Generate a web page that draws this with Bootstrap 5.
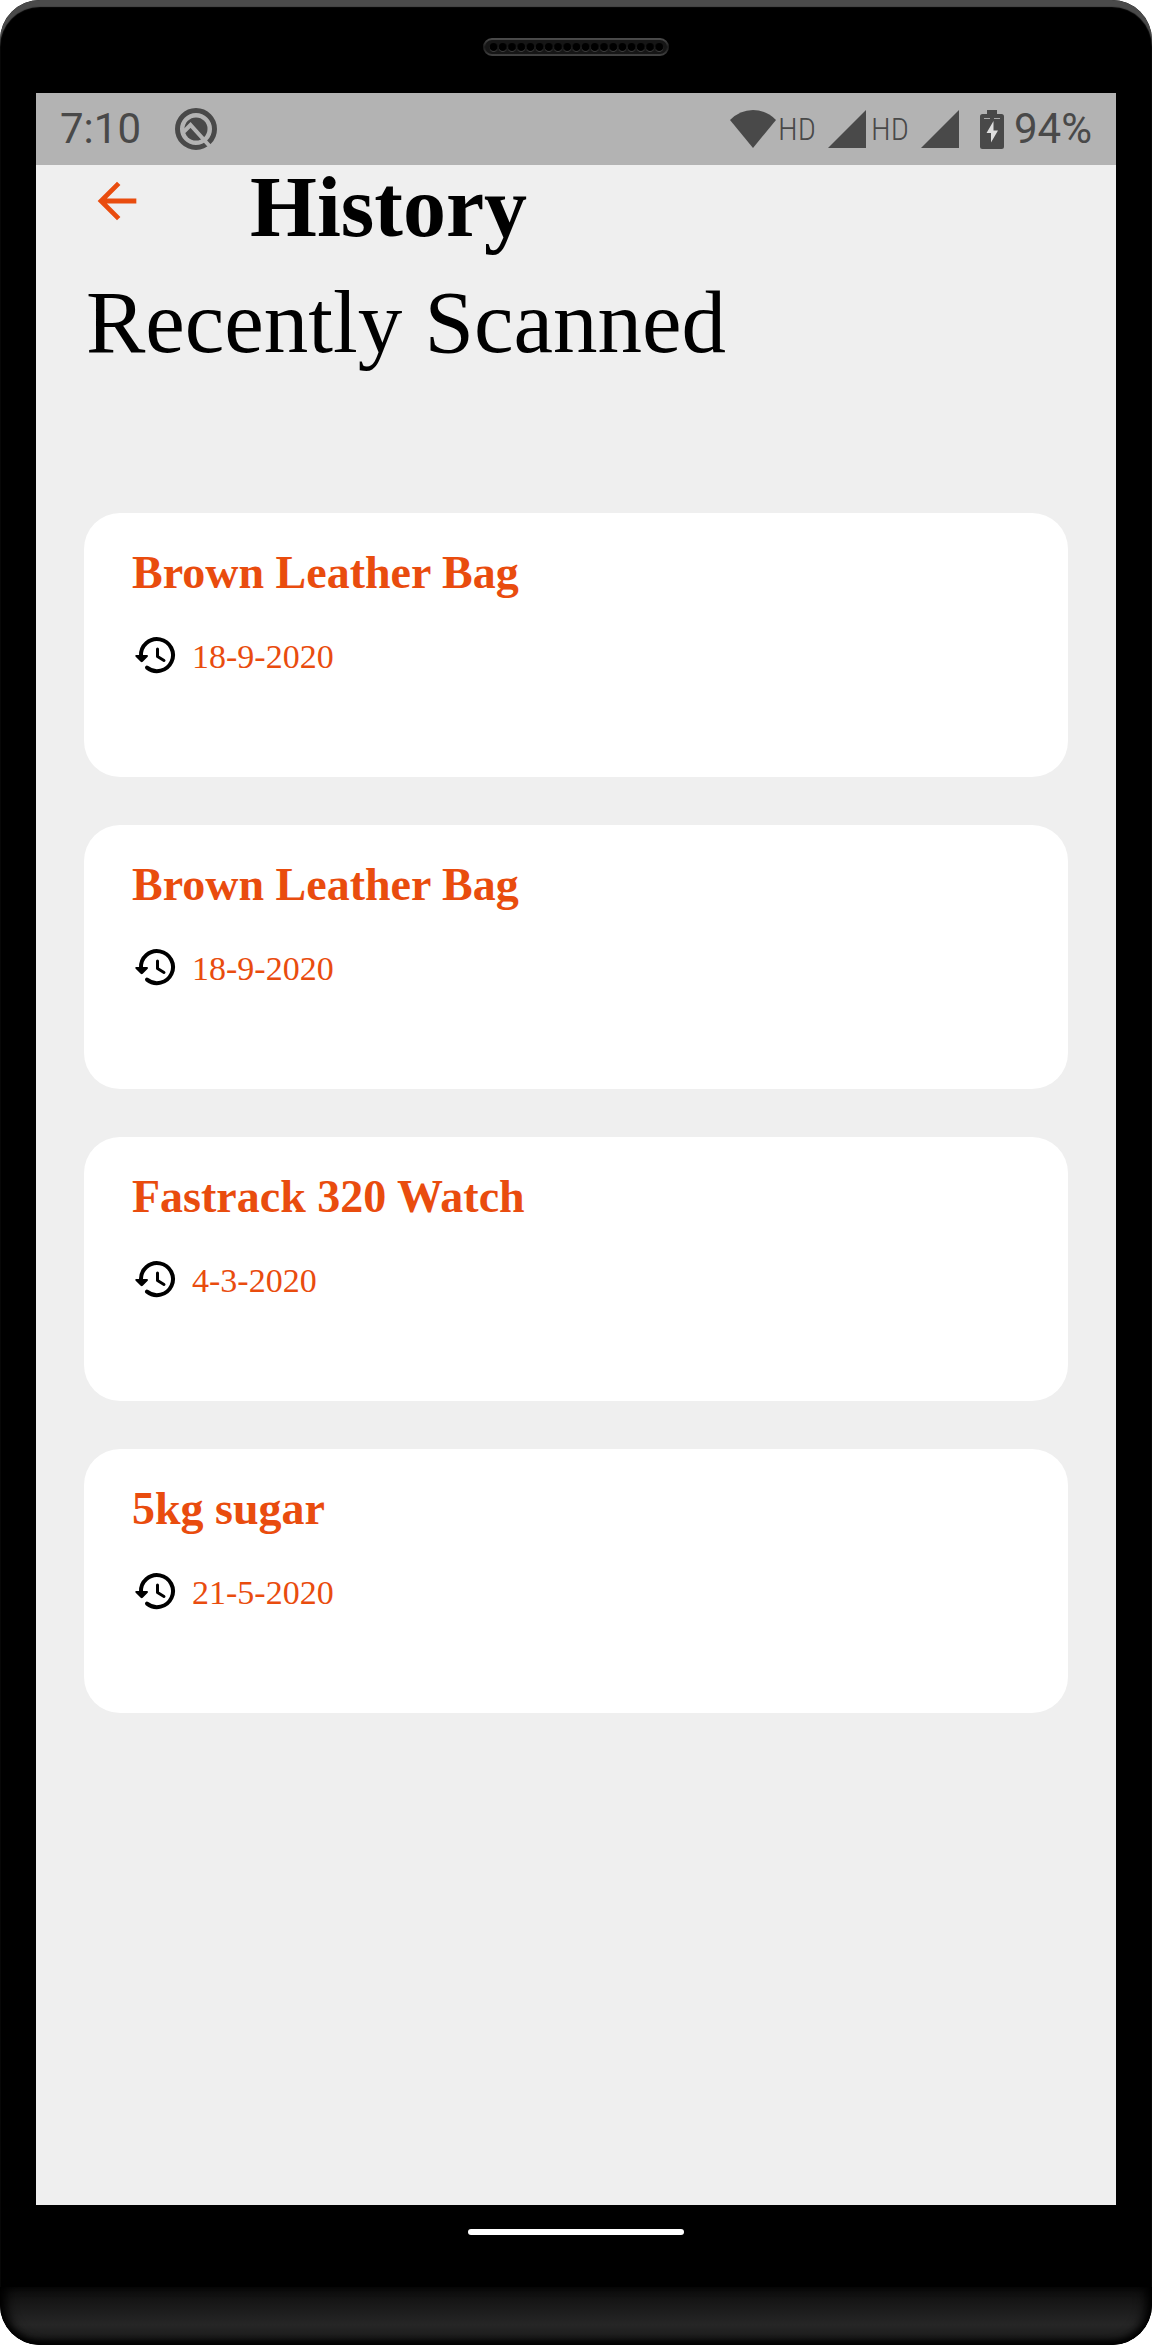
<!DOCTYPE html>
<html lang="en">
<head>
<meta charset="utf-8">
<meta name="viewport" content="width=device-width, initial-scale=1">
<title>History</title>
<link href="https://cdn.jsdelivr.net/npm/bootstrap@5.3.0/dist/css/bootstrap.min.css" rel="stylesheet">
<style>
:root { --accent: #e94c0e; --ink: #494949; }
body { background: #fff; }
.phone { background: #000; border-radius: 40px; box-shadow: inset 0 7px 1px #4a4a4a; overflow: hidden; }
.earpiece { height: 93px; padding-top: 38px; }
.earpiece svg { width: 186px; height: 18px; }
.display { margin: 0 36px; background: #efefef; color: #000; font-family: "Liberation Serif", serif; }
.status { height: 72px; padding: 0 24px; background: #b3b3b3; color: var(--ink); font: 400 42px/74px Roboto, sans-serif; }
.status svg { fill: currentColor; }
.notice-icon { margin-left: 34px; }
.signal { margin-right: 3px; }
.battery { margin: 0 10px 0 18px; }
.hd-label { width: 52px; padding-left: 2px; font: 300 32px/64px "Roboto Condensed", "Liberation Sans Narrow", "DejaVu Sans Condensed", sans-serif; }
.app-head { padding-left: 52px; gap: 104px; }
.back-btn { margin-top: 7px; color: var(--accent); line-height: 0; }
.app-title { font-size: 86px; line-height: 84px; font-weight: 700; }
.section-title { padding-left: 50px; font-size: 89px; line-height: 98px; font-weight: 400; }
.scans { margin-top: 142px; padding: 0 48px 48px; gap: 48px; }
.scan { min-height: 264px; padding: 32px 48px; border: 0; border-radius: 36px; color: var(--accent); }
.scan-name { font-size: 46px; line-height: 56px; font-weight: 700; color: var(--accent); }
.scan-date { margin-top: 34px; gap: 12px; font-size: 34px; line-height: 44px; }
.home-area { height: 82px; padding-top: 24px; }
.home-bar { width: 216px; height: 6px; border-radius: 3px; background: #fff; }
.chin { height: 58px; border-radius: 0 0 40px 40px; background: linear-gradient(#0c0c0c, #262626 65%, #1d1d1d 85%, #0b0b0b); box-shadow: inset 0 -3px 6px #000, inset 10px 0 12px -4px #000, inset -10px 0 12px -4px #000; }
</style>
</head>
<body>
<svg class="d-none" aria-hidden="true">
  <symbol id="history-icon" viewBox="0 0 48 44">
    <path d="M9 21A16 16 0 1 1 15 32.600" fill="none" stroke="#000" stroke-width="4" stroke-linecap="round"/>
    <path d="M4 20h11a1 1 0 0 1 .700 1.700l-5 5a1.500 1.500 0 0 1-2 0l-5-5A1 1 0 0 1 4 20z"/>
    <path d="M25.500 14v7.500l6.500 4" fill="none" stroke="#000" stroke-width="3" stroke-linecap="round" stroke-linejoin="round"/>
  </symbol>
  <symbol id="signal-icon" viewBox="0 0 38 38"><path d="M38 0v38H0z"/></symbol>
</svg>

<div class="phone d-flex flex-column min-vh-100">
  <div class="earpiece d-flex justify-content-center align-items-start">
    <svg viewBox="0 0 186 18" aria-hidden="true">
      <defs>
        <linearGradient id="rim" x2="0" y2="1"><stop stop-color="#4a4a4a"/><stop offset=".5" stop-color="#1c1c1c"/><stop offset="1" stop-color="#404040"/></linearGradient>
        <pattern id="holes" x="6" y="0" width="9.200" height="18" patternUnits="userSpaceOnUse">
          <circle cx="4.600" cy="9.800" r="3.900" fill="#4a4a4a"/><circle cx="4.600" cy="9" r="3.900" fill="#000"/>
        </pattern>
      </defs>
      <rect x="1" y="1" width="184" height="16" rx="8" fill="#161616" stroke="url(#rim)" stroke-width="2"/>
      <rect x="6" width="174.800" height="18" fill="url(#holes)"/>
    </svg>
  </div>

  <main class="display d-flex flex-column flex-grow-1">
    <div class="status d-flex align-items-center justify-content-between">
      <div class="d-flex align-items-center">
        <span>7:10</span>
        <svg class="notice-icon" width="42" height="42" viewBox="0 0 42 42" aria-hidden="true">
          <circle cx="21" cy="21" r="18.500" fill="none" stroke="currentColor" stroke-width="5"/>
          <circle cx="21" cy="21" r="11.500"/>
          <path d="M9 23.500l6.500-6.500L35 38.500" fill="none" stroke="#b3b3b3" stroke-width="4"/>
        </svg>
      </div>
      <div class="d-flex align-items-center">
        <svg width="46" height="38" viewBox="0 0 46 38" aria-hidden="true"><path d="M23 38L0 10Q10 0 23 0t23 10z"/></svg>
        <span class="hd-label">HD</span>
        <svg class="signal" width="38" height="38" aria-hidden="true"><use href="#signal-icon"/></svg>
        <span class="hd-label">HD</span>
        <svg class="signal" width="38" height="38" aria-hidden="true"><use href="#signal-icon"/></svg>
        <svg class="battery" width="24" height="39" viewBox="0 0 24 39" aria-hidden="true">
          <path d="M7 0h10v4h4.500A2.500 2.500 0 0 1 24 6.500v30a2.500 2.500 0 0 1-2.500 2.500h-19A2.500 2.500 0 0 1 0 36.500v-30A2.500 2.500 0 0 1 2.500 4H7z"/>
          <path d="M13.500 11v9.500H18L11 32.500V23H6.500z" fill="#ddd"/>
          <path d="M4 8.500h6M14 8.500h6" stroke="#aaa"/>
        </svg>
        <span>94%</span>
      </div>
    </div>

    <header class="app-head d-flex align-items-start">
      <button class="back-btn btn p-0 border-0" type="button" aria-label="Back">
        <svg width="58" height="58" viewBox="0 0 24 24" fill="currentColor" aria-hidden="true"><path d="M20 11H7.830l5.590-5.590L12 4l-8 8 8 8 1.410-1.410L7.830 13H20v-2z"/></svg>
      </button>
      <h1 class="app-title m-0">History</h1>
    </header>
    <h2 class="section-title mt-4 mb-0">Recently Scanned</h2>

    <section class="scans d-flex flex-column">
      <article class="scan card">
        <h3 class="scan-name m-0">Brown Leather Bag</h3>
        <div class="scan-date d-flex align-items-center"><svg width="48" height="44" aria-hidden="true"><use href="#history-icon"/></svg><span>18-9-2020</span></div>
      </article>
      <article class="scan card">
        <h3 class="scan-name m-0">Brown Leather Bag</h3>
        <div class="scan-date d-flex align-items-center"><svg width="48" height="44" aria-hidden="true"><use href="#history-icon"/></svg><span>18-9-2020</span></div>
      </article>
      <article class="scan card">
        <h3 class="scan-name m-0">Fastrack 320 Watch</h3>
        <div class="scan-date d-flex align-items-center"><svg width="48" height="44" aria-hidden="true"><use href="#history-icon"/></svg><span>4-3-2020</span></div>
      </article>
      <article class="scan card">
        <h3 class="scan-name m-0">5kg sugar</h3>
        <div class="scan-date d-flex align-items-center"><svg width="48" height="44" aria-hidden="true"><use href="#history-icon"/></svg><span>21-5-2020</span></div>
      </article>
    </section>
  </main>

  <div class="home-area d-flex justify-content-center"><div class="home-bar"></div></div>
  <div class="chin"></div>
</div>
<script src="https://cdn.jsdelivr.net/npm/bootstrap@5.3.0/dist/js/bootstrap.bundle.min.js"></script>
</body>
</html>
